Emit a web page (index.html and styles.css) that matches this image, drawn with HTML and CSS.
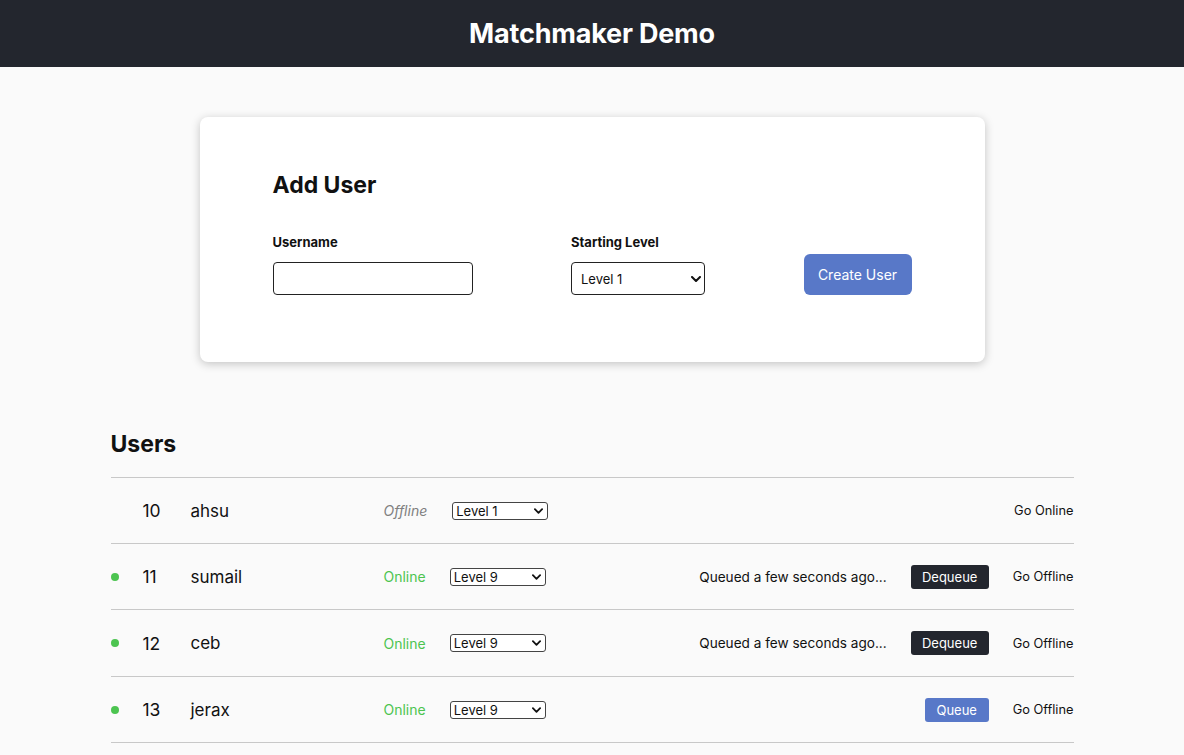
FILE: index.html
```html
<!DOCTYPE html>
<html>
<head>
<meta charset="utf-8">
<link rel="stylesheet" href="styles.css">
</head>
<body>
<header class="topbar"><h1 class="title">Matchmaker Demo</h1></header>
<main class="main">
  <section class="card">
    <h2 class="card-title">Add User</h2>
    <form class="form">
      <div class="field">
        <label class="label">Username</label>
        <input class="text-input" type="text">
      </div>
      <div class="field">
        <label class="label">Starting Level</label>
        <span class="select-wrap">
          <select class="select select-lg"><option>Level 1</option></select>
          <svg class="chev chev-lg" viewBox="0 0 10 6"><path d="M1 1l4 4 4-4" fill="none" stroke="#111" stroke-width="2" stroke-linecap="round" stroke-linejoin="round"/></svg>
        </span>
      </div>
      <button class="btn-create" type="button">Create User</button>
    </form>
  </section>

  <section class="users">
    <h2 class="users-title">Users</h2>
    <div class="list">
      <div class="row">
        <span class="dot-cell"></span>
        <span class="num">10</span>
        <span class="name">ahsu</span>
        <span class="status offline">Offline</span>
        <span class="select-wrap">
          <select class="select select-sm sm-w1"><option>Level 1</option></select>
          <svg class="chev" viewBox="0 0 10 6"><path d="M1 1l4 4 4-4" fill="none" stroke="#111" stroke-width="2" stroke-linecap="round" stroke-linejoin="round"/></svg>
        </span>
        <span class="actions"><span class="link">Go Online</span></span>
      </div>
      <div class="row">
        <span class="dot-cell"><span class="dot"></span></span>
        <span class="num">11</span>
        <span class="name">sumail</span>
        <span class="status online">Online</span>
        <span class="select-wrap">
          <select class="select select-sm"><option>Level 9</option></select>
          <svg class="chev" viewBox="0 0 10 6"><path d="M1 1l4 4 4-4" fill="none" stroke="#111" stroke-width="2" stroke-linecap="round" stroke-linejoin="round"/></svg>
        </span>
        <span class="actions">
          <span class="queued">Queued a few seconds ago...</span>
          <button class="btn-small dark" type="button">Dequeue</button>
          <span class="link">Go Offline</span>
        </span>
      </div>
      <div class="row">
        <span class="dot-cell"><span class="dot"></span></span>
        <span class="num">12</span>
        <span class="name">ceb</span>
        <span class="status online">Online</span>
        <span class="select-wrap">
          <select class="select select-sm"><option>Level 9</option></select>
          <svg class="chev" viewBox="0 0 10 6"><path d="M1 1l4 4 4-4" fill="none" stroke="#111" stroke-width="2" stroke-linecap="round" stroke-linejoin="round"/></svg>
        </span>
        <span class="actions">
          <span class="queued">Queued a few seconds ago...</span>
          <button class="btn-small dark" type="button">Dequeue</button>
          <span class="link">Go Offline</span>
        </span>
      </div>
      <div class="row">
        <span class="dot-cell"><span class="dot"></span></span>
        <span class="num">13</span>
        <span class="name">jerax</span>
        <span class="status online">Online</span>
        <span class="select-wrap">
          <select class="select select-sm"><option>Level 9</option></select>
          <svg class="chev" viewBox="0 0 10 6"><path d="M1 1l4 4 4-4" fill="none" stroke="#111" stroke-width="2" stroke-linecap="round" stroke-linejoin="round"/></svg>
        </span>
        <span class="actions">
          <button class="btn-small blue" type="button">Queue</button>
          <span class="link">Go Offline</span>
        </span>
      </div>
    </div>
  </section>
</main>
</body>
</html>
```

FILE: styles.css
```css
* { box-sizing: border-box; }
html, body { margin: 0; padding: 0; }
body {
  background: #fafafa;
  font-family: Inter, "Noto Sans", sans-serif;
  color: #111;
}
.topbar {
  height: 67px;
  background: #23262e;
  display: flex;
  align-items: center;
  justify-content: center;
}
.title {
  margin: 0;
  color: #fff;
  font-size: 27px;
  font-weight: 700;
  letter-spacing: -0.2px;
}
.main {
  padding-top: 50px;
  display: flex;
  flex-direction: column;
  align-items: center;
}
.card {
  width: 785px;
  height: 245px;
  background: #fff;
  border-radius: 8px;
  box-shadow: 0 2px 10px rgba(0,0,0,0.22);
  padding: 54px 73px 0 73px;
}
.card-title {
  margin: 0;
  font-size: 23px;
  font-weight: 700;
  line-height: 28px;
}
.form {
  margin-top: 35px;
  display: flex;
  justify-content: space-between;
  align-items: flex-end;
}
.field { display: flex; flex-direction: column; }
.label {
  font-size: 13px;
  font-weight: 700;
  line-height: 16px;
  margin-bottom: 12px;
}
.text-input {
  width: 200px;
  height: 33px;
  border: 1px solid #222;
  border-radius: 4px;
  background: #fff;
  font-family: inherit;
  font-size: 14px;
  padding: 0 8px;
}
.select-wrap { position: relative; display: inline-flex; }
.select {
  appearance: none;
  -webkit-appearance: none;
  background: #fff;
  font-family: inherit;
  color: #111;
  margin: 0;
}
.select-lg {
  width: 134px;
  height: 33px;
  border: 1px solid #222;
  border-radius: 4px;
  font-size: 13px;
  padding: 0 9px;
}
.chev {
  position: absolute;
  width: 9px;
  height: 6px;
  right: 5px;
  top: 50%;
  margin-top: -3px;
}
.chev-lg { right: 4px; width: 10px; }
.btn-create {
  width: 108px;
  height: 41px;
  border: none;
  border-radius: 6px;
  background: #5878c8;
  color: #fff;
  font-family: inherit;
  font-size: 14px;
  cursor: pointer;
}
.users {
  width: 963px;
  margin-top: 68px;
}
.users-title {
  margin: 0 0 19px 0;
  font-size: 23px;
  font-weight: 700;
  line-height: 28px;
}
.list { border-top: 1px solid #c8c8c8; }
.row {
  height: 66px;
  border-bottom: 1px solid #c8c8c8;
  display: flex;
  align-items: center;
}
.row:nth-child(3) { height: 67px; }
.dot-cell {
  width: 32px;
  display: flex;
  align-items: center;
}
.dot {
  width: 8px;
  height: 8px;
  border-radius: 50%;
  background: #4cc450;
}
.num { width: 48px; font-size: 17.5px; }
.name { width: 193px; font-size: 17px; }
.status { font-size: 14px; margin-right: 24px; }
.online { color: #4cc450; }
.offline { color: #808080; font-style: italic; margin-right: 25px; }
.select-sm {
  width: 96px;
  height: 18px;
  border: 1px solid #444;
  border-radius: 3px;
  font-size: 13px;
  padding: 0 3px;
  line-height: 16px;
}
.actions {
  margin-left: auto;
  display: flex;
  align-items: center;
  gap: 24px;
}
.queued { font-size: 13.6px; }
.btn-small {
  height: 24px;
  border: none;
  border-radius: 3px;
  color: #fff;
  font-family: inherit;
  font-size: 13px;
  padding: 0;
}
.dark { background: #23262e; width: 78px; }
.blue { background: #5878c8; width: 64px; }
.link { font-size: 12.8px; }
```
